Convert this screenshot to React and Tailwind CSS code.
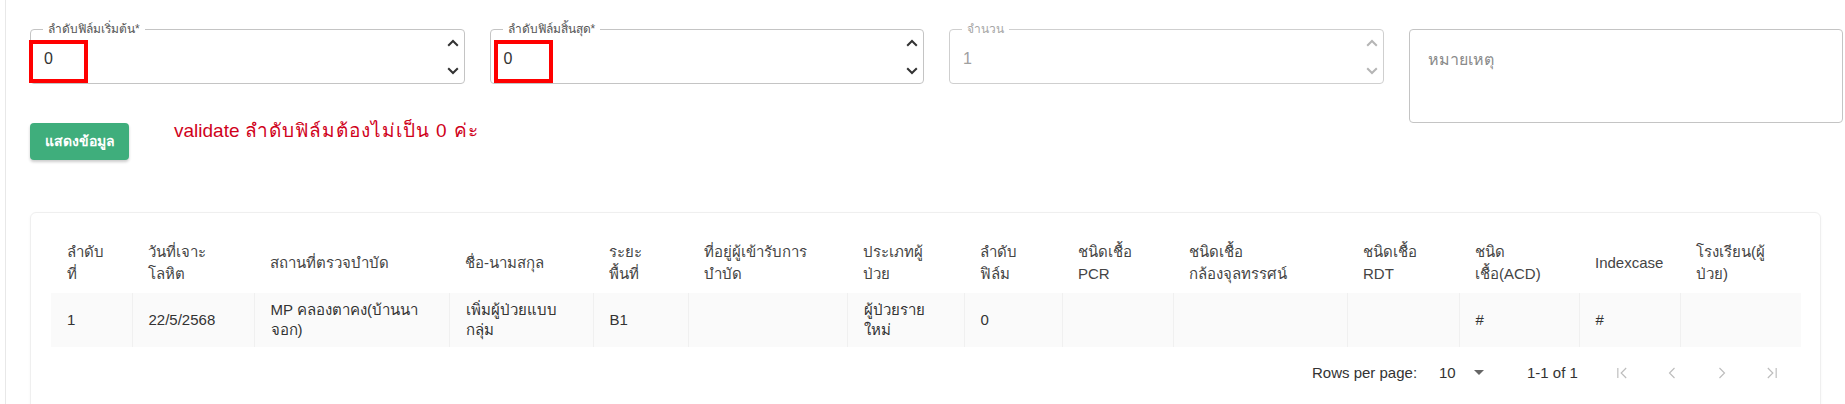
import React from "react"

const cols = [
  { w: "w-[81px]", head: ["ลำดับ", "ที่"], cell: ["1"] },
  { w: "w-[122px]", head: ["วันที่เจาะ", "โลหิต"], cell: ["22/5/2568"] },
  { w: "w-[195px]", head: ["สถานที่ตรวจบำบัด"], cell: ["MP คลองตาคง(บ้านนา", "จอก)"] },
  { w: "w-[144px]", head: ["ชื่อ-นามสกุล"], cell: ["เพิ่มผู้ป่วยแบบ", "กลุ่ม"] },
  { w: "w-[95px]", head: ["ระยะ", "พื้นที่"], cell: ["B1"] },
  { w: "w-[159px]", head: ["ที่อยู่ผู้เข้ารับการ", "บำบัด"], cell: [] },
  { w: "w-[117px]", head: ["ประเภทผู้", "ป่วย"], cell: ["ผู้ป่วยราย", "ใหม่"] },
  { w: "w-[98px]", head: ["ลำดับ", "ฟิล์ม"], cell: ["0"] },
  { w: "w-[111px]", head: ["ชนิดเชื้อ", "PCR"], cell: [] },
  { w: "w-[174px]", head: ["ชนิดเชื้อ", "กล้องจุลทรรศน์"], cell: [] },
  { w: "w-[112px]", head: ["ชนิดเชื้อ", "RDT"], cell: [] },
  { w: "w-[120px]", head: ["ชนิด", "เชื้อ(ACD)"], cell: ["#"] },
  { w: "w-[101px]", head: ["Indexcase"], cell: ["#"] },
  { w: "w-[121px]", head: ["โรงเรียน(ผู้", "ป่วย)"], cell: [] },
]

function Spinner({ disabled }) {
  const c = disabled ? "#b5b5b5" : "#333"
  return (
    <div className="flex flex-col gap-[20px]">
      <svg width="12" height="8" viewBox="0 0 12 8">
        <path d="M1.2 6.8 6 2l4.8 4.8" stroke={c} strokeWidth="2" fill="none" />
      </svg>
      <svg width="12" height="8" viewBox="0 0 12 8">
        <path d="M1.2 1.2 6 6l4.8-4.8" stroke={c} strokeWidth="2" fill="none" />
      </svg>
    </div>
  )
}

function NumberField({ label, value, disabled, marker }) {
  return (
    <div
      className={`relative h-[55px] rounded-[4px] border flex items-center pl-[13px] pr-[5px] ${
        disabled ? "border-[#cfcfcf]" : "border-[#c4c4c4]"
      }`}
    >
      <span
        className={`absolute left-[12px] -top-[8px] bg-white px-[5px] text-[12px] leading-[14px] ${
          disabled ? "text-[#a6a6a6]" : "text-[#555]"
        }`}
      >
        {label}
      </span>
      <span className={`flex-1 mt-[5px] text-[16px] ${disabled ? "text-[#a0a0a0]" : "text-[#333]"}`}>
        {value}
      </span>
      <Spinner disabled={disabled} />
      {marker}
    </div>
  )
}

function PageIcon({ d }) {
  return (
    <button className="w-[40px] h-[40px] flex items-center justify-center">
      <svg width="20" height="20" viewBox="0 0 24 24">
        <path d={d} stroke="#bdbdbd" strokeWidth="1.4" fill="none" />
      </svg>
    </button>
  )
}

export default function App() {
  return (
    <div className="h-[404px] overflow-hidden bg-white pl-[5px] font-['Liberation_Sans',sans-serif]">
      <div className="h-full border-l border-[#e8e8e8] pl-[24px] pr-[2px] pt-[29px]">
        {/* filter fields */}
        <div className="grid grid-cols-4 gap-[25px] items-start">
          <NumberField
            label="ลำดับฟิล์มเริ่มต้น*"
            value="0"
            marker={<div className="absolute -left-[2px] top-[10px] w-[59px] h-[43px] border-[4px] border-[#ff0000]" />}
          />
          <NumberField
            label="ลำดับฟิล์มสิ้นสุด*"
            value="0"
            marker={<div className="absolute left-[3px] top-[10px] w-[59px] h-[43px] border-[4px] border-[#ff0000]" />}
          />
          <NumberField label="จำนวน" value="1" disabled />
          <textarea
            placeholder="หมายเหตุ"
            className="h-[94px] w-full resize-none rounded-[4px] border border-[#c4c4c4] pl-[18px] pt-[18px] text-[16px] leading-[23px] text-[#333] placeholder:text-[#8a8a8a] outline-none"
          />
        </div>

        <div className="flex items-start -mt-[4px]">
          <button className="mt-[4px] w-[99px] h-[37px] rounded-[4px] bg-[#3fae7c] text-white text-[14px] font-bold shadow-[0_2px_3px_rgba(0,0,0,0.2)]">
            แสดงข้อมูล
          </button>
          <p className="ml-[45px] text-[19px] leading-[24px] font-medium text-[#d0021b]">
            validate <span className="tracking-[1px]">ลำดับฟิล์มต้องไม่เป็น 0 ค่ะ</span>
          </p>
        </div>

        {/* table card */}
        <div className="mt-[52px] mr-[22px] rounded-[6px] border border-[#efefef] shadow-[0_1px_3px_rgba(0,0,0,0.04)] px-[20px] pt-[20px] pb-[20px]">
          <table className="w-full table-fixed border-collapse text-[15px] text-[#333]">
            <colgroup>
              {cols.map((c, i) => (
                <col key={i} className={c.w} />
              ))}
            </colgroup>
            <thead>
              <tr className="h-[60px]">
                {cols.map((c, i) => (
                  <th key={i} className="text-left font-normal text-[#444] pl-[16px] pr-[6px] leading-[22px] align-middle">
                    {c.head.map((l, j) => (
                      <div key={j}>{l}</div>
                    ))}
                  </th>
                ))}
              </tr>
            </thead>
            <tbody>
              <tr className="h-[54px] bg-[#fafafa]">
                {cols.map((c, i) => (
                  <td
                    key={i}
                    className={`pl-[16px] pr-[6px] leading-[20px] align-middle ${i > 0 ? "border-l border-[#f0f0f0]" : ""}`}
                  >
                    {c.cell.map((l, j) => (
                      <div key={j}>{l}</div>
                    ))}
                  </td>
                ))}
              </tr>
            </tbody>
          </table>

          {/* pagination */}
          <div className="flex justify-end items-center h-[52px] pr-[8px] text-[15px] text-[#333]">
            <span className="w-[127px]">Rows per page:</span>
            <span className="w-[30px]">10</span>
            <span className="w-[20px] flex justify-center">
              <svg width="10" height="6" viewBox="0 0 10 6">
                <path d="M0 0h10L5 5z" fill="#666" />
              </svg>
            </span>
            <span className="w-[38px]" />
            <span className="w-[75px]">1-1 of 1</span>
            <div className="flex gap-[10px]">
              <PageIcon d="M7 6v12M17 6l-6 6 6 6" />
              <PageIcon d="M15 6l-6 6 6 6" />
              <PageIcon d="M9 6l6 6-6 6" />
              <PageIcon d="M7 6l6 6-6 6M17 6v12" />
            </div>
          </div>
        </div>
      </div>
    </div>
  )
}
